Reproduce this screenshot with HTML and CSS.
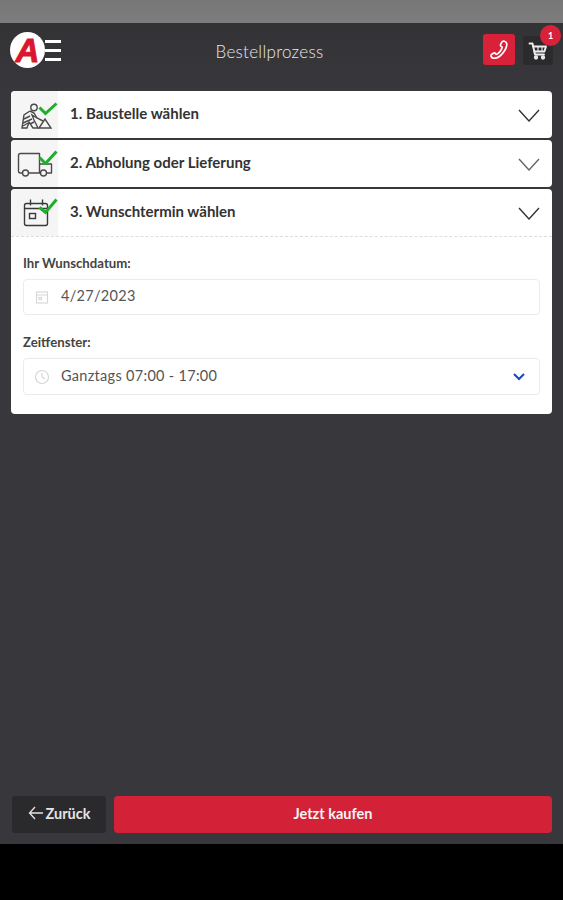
FILE: index.html
```html
<!DOCTYPE html>
<html lang="de">
<head>
    <meta charset="UTF-8">
    <meta name="viewport" content="width=device-width, initial-scale=1.0">
    <title>Bestellprozess</title>
    <link rel="stylesheet" href="styles.css">
</head>
<body>
    <div class="status-bar"></div>

    <div class="app">
        <header class="top-bar">
            <div class="logo">
                <span class="logo-circle"><span class="logo-letter">A</span></span>
                <span class="logo-lines"><i></i><i></i><i></i></span>
            </div>
            <div class="top-title">Bestellprozess</div>
            <div class="top-actions">
                <button class="phone-button">
                    <svg width="22" height="22" viewBox="0 0 22 22" fill="none" stroke="#fff" stroke-width="1.7" stroke-linejoin="round">
                        <path d="M14.2 2.6 C15.6 1.6 17.4 2.2 18.3 3.6 C19.4 5.4 18.6 8.6 16.2 12.2 C13.6 16 10.4 18.8 7.2 19.2 C5.4 19.4 3.4 18.4 3 17 C2.8 16.2 3.2 15.6 3.8 15.2 L5.4 14.2 C6.2 13.7 7 13.9 7.5 14.6 L8.2 15.5 C10.6 14.4 13.4 11 14.2 8.2 L13.2 7.6 C12.4 7.1 12.2 6.2 12.6 5.4 Z"/>
                    </svg>
                </button>
                <button class="cart-button">
                    <svg width="20" height="20" viewBox="0 0 20 20" fill="none" stroke="#eee" stroke-width="1.9" stroke-linejoin="round" stroke-linecap="round">
                        <path d="M1.5 2.5 H4.5 L7 13.500 H16"/>
                        <path d="M5.2 5.5 H18 L16.4 10.5 H6.4"/>
                        <path d="M10 6 V10 M14 6 V10" stroke-width="1.100"/>
                        <circle cx="8" cy="16.5" r="1.2"/>
                        <circle cx="15" cy="16.5" r="1.2"/>
                    </svg>
                    <span class="cart-badge">1</span>
                </button>
            </div>
        </header>

        <main class="steps">
            <section class="step">
                <div class="step-head">
                    <div class="step-icon">
                        <svg class="step-svg" width="42" height="36" viewBox="0 0 42 36" fill="none" stroke="#4a4a4a" stroke-width="1.4">
                            <circle cx="20" cy="10.500" r="3.2"/>
                            <path d="M16 14 L10 18 L8 31 H13 L15 25 L19 31 H24 L20 23 L18 18 L23 21 L29 24"/>
                            <path d="M16 14 L20 16 L23 21"/>
                            <path d="M10 22 L16 19 M9 26 L18 22 M9 29 L14 26 M16 27 L20 25"/>
                            <path d="M25 31 L31 22 L37 31 Z"/>
                            <path class="check" d="M25.500 10.500 L31.500 16.500 L42.500 6.500"/>
                        </svg>
                    </div>
                    <h2 class="step-title">1. Baustelle wählen</h2>
                    <svg class="chevron" width="24" height="14" viewBox="0 0 24 14" fill="none" stroke="#333" stroke-width="1.4"><path d="M2 2 L12 13 L22 2"/></svg>
                </div>
            </section>

            <section class="step">
                <div class="step-head">
                    <div class="step-icon">
                        <svg class="step-svg" width="42" height="36" viewBox="0 0 42 36" fill="none" stroke="#4a4a4a" stroke-width="1.4" stroke-linejoin="round">
                            <path d="M8.500 27 H6.500 Q4.500 27 4.500 25 V9.500 Q4.500 7.500 6.500 7.500 H25.500 V27 H14.500"/>
                            <path d="M25.500 18 H37.500 V27 H32.500 M26.500 27 H25.500"/>
                            <circle cx="11.500" cy="27" r="3"/>
                            <circle cx="29.500" cy="27" r="3"/>
                            <path class="check" d="M25.500 11.500 L31.500 17.500 L42.500 5.500"/>
                        </svg>
                    </div>
                    <h2 class="step-title">2. Abholung oder Lieferung</h2>
                    <svg class="chevron" width="24" height="14" viewBox="0 0 24 14" fill="none" stroke="#666" stroke-width="1.4"><path d="M2 2 L12 13 L22 2"/></svg>
                </div>
            </section>

            <section class="step">
                <div class="step-head step-head-open">
                    <div class="step-icon">
                        <svg class="step-svg" width="42" height="36" viewBox="0 0 42 36" fill="none" stroke="#3a3a3a" stroke-width="1.4">
                            <rect x="10.500" y="8.500" width="23" height="22" rx="2"/>
                            <path d="M10.500 13.500 H33.500 M16.500 4.500 V10.500 M28.500 4.500 V10.500"/>
                            <rect x="15.500" y="18.500" width="6" height="5"/>
                            <path class="check" d="M25.500 12.500 L31.500 17.500 L42.500 4.500"/>
                        </svg>
                    </div>
                    <h2 class="step-title">3. Wunschtermin wählen</h2>
                    <svg class="chevron" width="24" height="14" viewBox="0 0 24 14" fill="none" stroke="#333" stroke-width="1.4"><path d="M2 2 L12 13 L22 2"/></svg>
                </div>

                <div class="step-body">
                    <label class="field-label">Ihr Wunschdatum:</label>
                    <div class="field field-date">
                        <svg class="field-icon" width="14" height="14" viewBox="0 0 14 14" fill="none" stroke="#d6d6d6" stroke-width="1.1">
                            <rect x="1.500" y="2" width="11" height="11"/>
                            <path d="M1.500 5 H12.500"/>
                            <rect x="4" y="7.500" width="2.500" height="2"/>
                        </svg>
                        <span class="field-value">4/27/2023</span>
                    </div>

                    <label class="field-label field-label-second">Zeitfenster:</label>
                    <div class="field">
                        <svg class="field-icon" width="16" height="16" viewBox="0 0 16 16" fill="none" stroke="#d6d6d6" stroke-width="1.2">
                            <circle cx="8" cy="8" r="6.500"/>
                            <path d="M8 4 V8 L11 10"/>
                        </svg>
                        <span class="field-value">Ganztags 07:00 - 17:00</span>
                        <svg class="select-arrow" width="14" height="9" viewBox="0 0 14 9" fill="none" stroke="#1e44bd" stroke-width="2"><path d="M2 2 L7 7 L12 2"/></svg>
                    </div>
                </div>
            </section>
        </main>

        <footer class="bottom-bar">
            <button class="back-button">
                <svg width="16" height="14" viewBox="0 0 16 14" fill="none" stroke="#e4e4e4" stroke-width="1.3"><path d="M7 1 L1.500 7 L7 13 M1.500 7 H15"/></svg>
                Zurück
            </button>
            <button class="buy-button">Jetzt kaufen</button>
        </footer>
    </div>

    <div class="nav-bar"></div>
</body>
</html>
```

FILE: styles.css
```css
/* Reset default margins */
* {
    margin: 0;
    padding: 0;
    box-sizing: border-box;
}

body {
    font-family: Lato, "Liberation Sans", sans-serif;
    height: 900px;
    display: flex;
    flex-direction: column;
    background: #000;
    color: #333;
    overflow: hidden;
}

button {
    font-family: inherit;
    border: none;
}

.status-bar {
    height: 23px;
    background: linear-gradient(180deg, #777, #7d7d7d);
}

.app {
    height: 821px;
    display: flex;
    flex-direction: column;
    background: #38383c;
}

/* Top bar */
.top-bar {
    height: 68px;
    padding: 10px 10px 0 10px;
    display: flex;
    align-items: flex-start;
    background: linear-gradient(180deg, #333336, #38383c);
}

.logo {
    width: 130px;
    display: flex;
    align-items: center;
}

.logo-circle {
    width: 35px;
    height: 36px;
    margin-top: -1px;
    border-radius: 50%;
    background: #fff;
    display: flex;
    align-items: center;
    justify-content: center;
    flex-shrink: 0;
}

.logo-letter {
    font-family: "Liberation Sans", sans-serif;
    font-weight: 700;
    font-style: italic;
    font-size: 33px;
    line-height: 1;
    color: #d9182d;
    -webkit-text-stroke: 1px #d9182d;
}

.logo-lines {
    display: flex;
    flex-direction: column;
    gap: 6px;
}

.logo-lines i {
    display: block;
    width: 16px;
    height: 3px;
    background: #fff;
}

.top-title {
    flex: 1;
    padding-top: 8px;
    padding-right: 84px;
    text-align: center;
    font-size: 17px;
    font-weight: 300;
    letter-spacing: 0.3px;
    color: #e8e8e8;
}

.top-actions {
    width: 70px;
    display: flex;
    gap: 8px;
}

.phone-button {
    width: 32px;
    height: 31px;
    margin-top: 1px;
    background: #d9213a;
    border-radius: 3px;
    display: flex;
    align-items: center;
    justify-content: center;
}

.cart-button {
    position: relative;
    width: 30px;
    height: 29px;
    margin-top: 3px;
    background: #2b2b2d;
    border-radius: 3px;
    display: flex;
    align-items: center;
    justify-content: center;
}

.cart-badge {
    position: absolute;
    top: -11px;
    right: -8px;
    width: 21px;
    height: 21px;
    border-radius: 50%;
    background: #d9213a;
    color: #fff;
    font-size: 9px;
    font-weight: 700;
    line-height: 21px;
    text-align: center;
}

/* Step cards */
.steps {
    flex: 1;
    padding: 0 11px;
    display: flex;
    flex-direction: column;
    gap: 2px;
}

.step {
    background: #fff;
    border-radius: 4px;
    overflow: hidden;
}

.step-head {
    height: 47px;
    display: flex;
    align-items: center;
}

.step-head-open {
    height: 48px;
    border-bottom: 1px dashed #ddd;
}

.step-icon {
    width: 47px;
    height: 100%;
    background: #f5f5f5;
    display: flex;
    align-items: center;
    justify-content: center;
    flex-shrink: 0;
}

.step-svg {
    overflow: visible;
}

.check {
    stroke: #1fae2c;
    stroke-width: 3;
}

.step-title {
    flex: 1;
    padding-left: 12px;
    padding-bottom: 4px;
    font-size: 15px;
    font-weight: 700;
    color: #333;
}

.chevron {
    margin-top: 1px;
    margin-right: 11px;
}

.step-body {
    padding: 19px 12px;
}

.field-label {
    display: block;
    font-size: 13.200px;
    line-height: 14px;
    font-weight: 700;
    color: #444;
    margin-bottom: 9px;
}

.field-label-second {
    margin-top: 20px;
}

.field {
    height: 37px;
    padding-left: 10px;
    display: flex;
    align-items: center;
    border: 1px solid #ebebeb;
    border-radius: 4px;
}

.field-date {
    height: 36px;
}

.field-icon {
    width: 16px;
    flex-shrink: 0;
}

.field-value {
    flex: 1;
    margin-left: 11px;
    padding-bottom: 3px;
    font-size: 14.500px;
    letter-spacing: 0.3px;
    color: #555;
}

.select-arrow {
    margin-right: 13px;
}

/* Bottom buttons */
.bottom-bar {
    padding: 0 11px 11px 12px;
    display: flex;
    gap: 8px;
}

.back-button {
    width: 94px;
    height: 37px;
    padding-bottom: 3px;
    background: #2a2a2c;
    border-radius: 3px;
    color: #e4e4e4;
    font-size: 14.500px;
    font-weight: 700;
    display: flex;
    align-items: center;
    justify-content: center;
    gap: 2px;
}

.buy-button {
    flex: 1;
    height: 37px;
    padding-bottom: 3px;
    background: #d32237;
    border-radius: 4px;
    color: #f5f5f5;
    font-size: 14.500px;
    font-weight: 700;
}

.nav-bar {
    flex: 1;
    background: #000;
}
```
